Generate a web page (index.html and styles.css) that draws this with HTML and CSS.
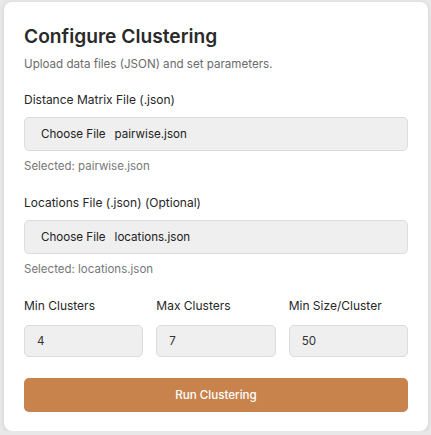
FILE: index.html
```html
<!DOCTYPE html>
<html lang="en">
<head>
<meta charset="utf-8">
<title>Configure Clustering</title>
<link rel="stylesheet" href="styles.css">
</head>
<body>
<div class="card">
  <h1 class="title">Configure Clustering</h1>
  <p class="subtitle">Upload data files (JSON) and set parameters.</p>

  <div class="field">
    <label class="label">Distance Matrix File (.json)</label>
    <div class="file-box"><span class="choose">Choose File</span><span class="fname">pairwise.json</span></div>
    <div class="selected">Selected: pairwise.json</div>
  </div>

  <div class="field">
    <label class="label">Locations File (.json) (Optional)</label>
    <div class="file-box"><span class="choose">Choose File</span><span class="fname">locations.json</span></div>
    <div class="selected">Selected: locations.json</div>
  </div>

  <div class="params">
    <div class="param">
      <label class="label">Min Clusters</label>
      <div class="num">4</div>
    </div>
    <div class="param">
      <label class="label">Max Clusters</label>
      <div class="num">7</div>
    </div>
    <div class="param">
      <label class="label">Min Size/Cluster</label>
      <div class="num">50</div>
    </div>
  </div>

  <button class="run">Run Clustering</button>
</div>
</body>
</html>
```

FILE: styles.css
```css
* { box-sizing: border-box; }
html, body { margin: 0; }
body {
  background: #e8e8e8;
  padding: 2px 3px 0 4px;
  font-family: Inter, "Noto Sans", sans-serif;
  color: #333;
}
.card {
  background: #fff;
  border-radius: 8px;
  box-shadow: 0 1px 4px rgba(0,0,0,0.12);
  padding: 20px;
  height: 429px;
}
.title {
  margin: 0;
  font-size: 19.2px;
  line-height: 28px;
  font-weight: 600;
  color: #2a2a2a;
}
.subtitle {
  margin: 5px 0 0;
  font-size: 11.6px;
  line-height: 18px;
  color: #6b6b6b;
}
.field { margin-top: 18px; }
.field + .field { margin-top: 20px; }
.label {
  display: block;
  font-size: 12px;
  line-height: 18px;
  font-weight: 400;
  color: #262626;
}
.file-box {
  margin-top: 8px;
  height: 34px;
  display: flex;
  align-items: center;
  padding-left: 16px;
  background: #efefef;
  border: 1px solid #dcdcdc;
  border-radius: 5px;
  font-size: 11.6px;
  color: #222;
}
.choose { margin-right: 9px; }
.selected {
  margin-top: 7px;
  font-size: 11.5px;
  line-height: 16px;
  color: #777;
}
.params {
  margin-top: 20px;
  display: grid;
  grid-template-columns: repeat(3, 1fr);
  gap: 13px;
}
.num {
  margin-top: 10px;
  height: 32px;
  display: flex;
  align-items: center;
  padding-left: 12px;
  background: #efefef;
  border: 1px solid #dcdcdc;
  border-radius: 5px;
  font-size: 11.6px;
  color: #333;
}
.run {
  display: block;
  width: 100%;
  margin-top: 21px;
  height: 34px;
  border: none;
  border-radius: 5px;
  background: #c8834d;
  color: #fff;
  font-family: inherit;
  font-size: 11.6px;
  font-weight: 500;
}
```
